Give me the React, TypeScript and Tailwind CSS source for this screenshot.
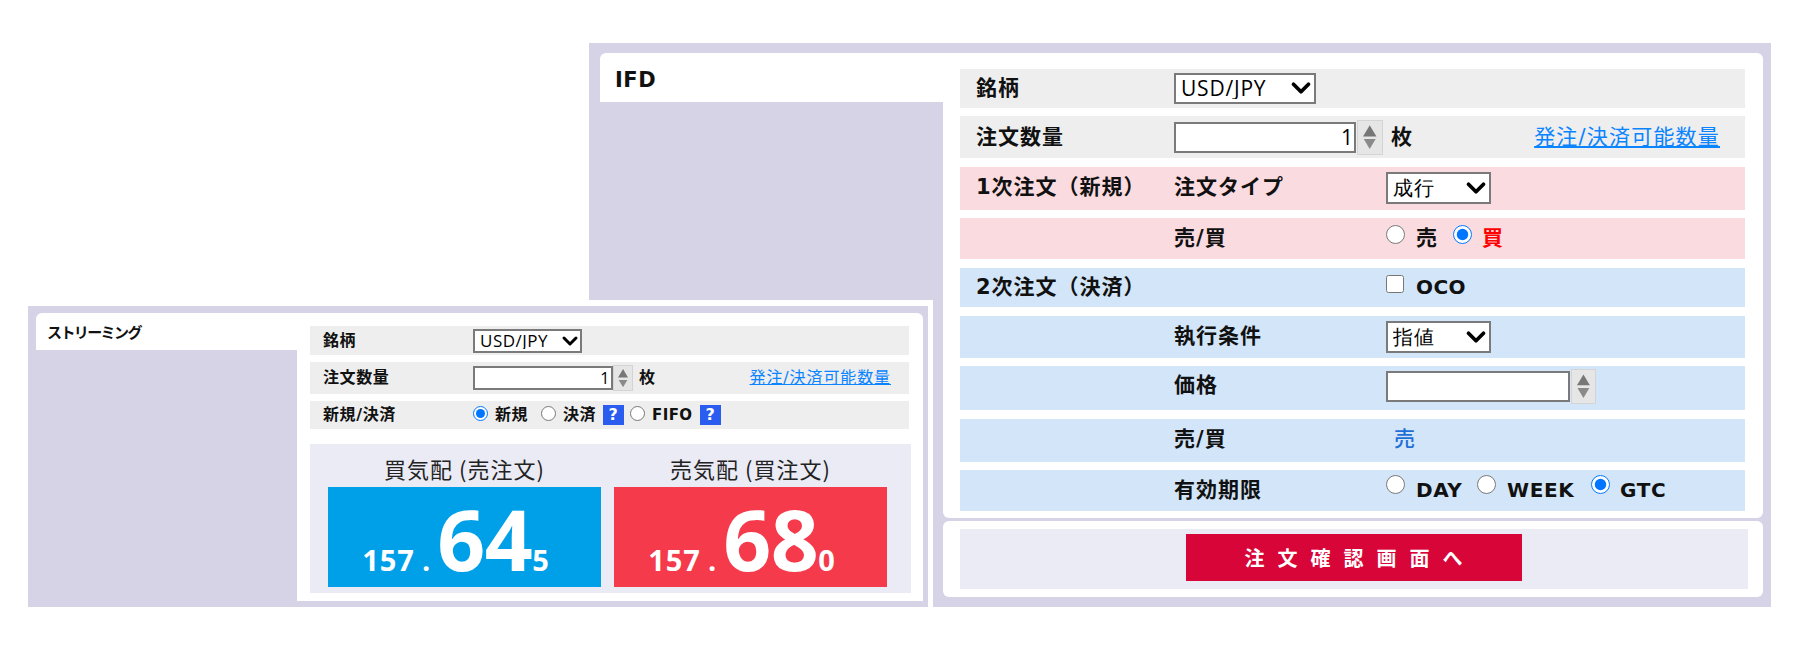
import { ReactNode } from "react";
import { ChevronDown } from "lucide-react";

const FONT = "font-['DejaVu_Sans','Noto_Sans_CJK_JP',sans-serif]";
const CJK = "font-['Noto_Sans_CJK_JP',sans-serif]";
const NUM = "font-['Open_Sans',sans-serif]";

function Select({ value, className, textClass, chevron }: { value: string; className: string; textClass: string; chevron: number }) {
  return (
    <span className={`relative block ${className}`}>
      <select
        defaultValue={value}
        className={`block h-full w-full appearance-none rounded-none border-2 border-[#7a7a7a] bg-white pl-[5px] font-normal text-black ${NUM} ${textClass}`}
      >
        <option>{value}</option>
      </select>
      <ChevronDown
        size={chevron}
        strokeWidth={3}
        className="pointer-events-none absolute right-0 top-1/2 -translate-y-1/2 text-black"
      />
    </span>
  );
}

function Spinner({ className }: { className: string }) {
  return (
    <span className={`flex flex-col items-center justify-center gap-[2px] border border-[#d4d4d4] bg-[#e6e6e6] ${className}`}>
      <svg viewBox="0 0 12 10" className="h-[36%] w-[56%]">
        <path d="M6 0 12 10H0Z" fill="#777777" />
      </svg>
      <svg viewBox="0 0 12 10" className="h-[30%] w-[56%]">
        <path d="M6 10 12 0H0Z" fill="#8a8a8a" />
      </svg>
    </span>
  );
}

function Radio({ checked, className }: { checked?: boolean; className: string }) {
  return <input type="radio" checked={!!checked} readOnly className={`m-0 shrink-0 ${className}`} />;
}

function Help() {
  return (
    <span className="flex h-[20px] w-[21px] items-center justify-center bg-[#2a5cf0] text-[16px] font-bold leading-none text-white">
      ?
    </span>
  );
}

function Price({ big, last, className }: { big: string; last: string; className: string }) {
  return (
    <div className={`flex h-[100px] w-[273px] items-baseline justify-center pr-[17px] font-bold text-white ${NUM} ${className}`}>
      <span className="text-[29px] leading-[104px] tracking-[1px]">157</span>
      <span className="ml-[7px] text-[29px] leading-[104px]">.</span>
      <span className="ml-[6px] text-[84px] leading-[104px] tracking-[-0.5px]">{big}</span>
      <span className="text-[29px] leading-[104px]">{last}</span>
    </div>
  );
}

function Row({ className, children }: { className: string; children: ReactNode }) {
  return <div className={`relative flex items-center ${className}`}>{children}</div>;
}

function BigRow({ bg, h, first, second, children }: { bg: string; h: string; first?: string; second?: string; children?: ReactNode }) {
  return (
    <Row className={`${bg} ${h} text-[21px] font-bold tracking-[1px] text-[#111]`}>
      <span className="w-[214px] shrink-0 pl-[16px]">{first}</span>
      <span className="w-[212px] shrink-0">{second}</span>
      {children}
    </Row>
  );
}

function StreamingPanel() {
  return (
    <section className={`absolute left-[28px] top-[300px] box-content flex h-[288px] w-[887px] border-t-[6px] border-r-[5px] border-white bg-[#d6d3e6] pb-[6px] pl-[8px] pr-[5px] pt-[7px] ${FONT}`}>
      <div className="w-[261px] shrink-0">
        <div className="h-[37px] rounded-tl-md bg-white pl-[11px] pt-[8px] text-[15px] font-bold leading-[24px] tracking-[-1.6px] text-[#111]">
          ストリーミング
        </div>
      </div>
      <div className="flex-1 rounded-tr-md bg-white pl-[13px] pr-[12px] pt-[13px]">
        <div className="mr-[2px] flex flex-col gap-[7px] text-[16px] font-bold tracking-[0.6px] text-[#111]">
          <Row className="h-[29px] bg-[#eeeeee]">
            <span className="w-[163px] pl-[13px]">銘柄</span>
            <Select value="USD/JPY" className="h-[24px] w-[109px]" textClass="text-[17px] leading-none tracking-[0.5px]" chevron={24} />
          </Row>
          <Row className="h-[32px] bg-[#eeeeee]">
            <span className="w-[163px] pl-[13px]">注文数量</span>
            <input
              type="text"
              readOnly
              value="1"
              className={`h-[24px] w-[140px] rounded-none border-2 border-[#7a7a7a] bg-white pr-[1px] text-right text-[16px] font-normal text-black ${NUM}`}
            />
            <Spinner className="h-[26px] w-[20px]" />
            <span className="ml-[6px]">枚</span>
            <a className="ml-auto mr-[18px] text-[16px] font-normal tracking-[0.9px] text-[#0a84ff] underline">発注/決済可能数量</a>
          </Row>
          <Row className="h-[28px] bg-[#eeeeee]">
            <span className="w-[163px] pl-[13px]">新規/決済</span>
            <Radio checked className="size-[15px] -translate-y-[2px]" />
            <span className="ml-[7px] w-[46px]">新規</span>
            <Radio className="size-[15px] -translate-y-[2px]" />
            <span className="ml-[7px] w-[40px]">決済</span>
            <Help />
            <Radio className="ml-[6px] size-[15px] -translate-y-[2px]" />
            <span className="ml-[7px] w-[48px] text-[15px] tracking-[0.4px]">FIFO</span>
            <Help />
          </Row>
        </div>
        <div className="mt-[15px] h-[149px] bg-[#ebebf5] px-[18px] pt-[6px]">
          <div className={`grid grid-cols-[273px_273px] gap-x-[13px] text-center text-[22px] font-normal leading-[37px] tracking-[1px] text-[#222] ${CJK}`}>
            <span>買気配 (売注文)</span>
            <span>売気配 (買注文)</span>
            <Price big="64" last="5" className="bg-[#00a0e9]" />
            <Price big="68" last="0" className="bg-[#f43a4b]" />
          </div>
        </div>
      </div>
    </section>
  );
}

function IfdPanel() {
  return (
    <section className={`ml-[589px] flex h-[564px] w-[1182px] bg-[#d6d3e6] pl-[11px] pr-[8px] pt-[10px] ${FONT}`}>
      <div className="w-[343px] shrink-0">
        <div className="h-[49px] rounded-tl-md bg-white pl-[15px] pt-[13px] text-[21px] font-bold leading-[28px] tracking-[0.5px] text-[#111]">IFD</div>
      </div>
      <div className="flex-1">
        <div className="flex h-[465px] flex-col gap-y-[8.4px] rounded-b-md rounded-tr-md bg-white pb-[7px] pl-[17px] pr-[18px] pt-[16px]">
          <BigRow bg="bg-[#eeeeee]" h="h-[39px]" first="銘柄">
            <Select value="USD/JPY" className="-ml-[212px] h-[31px] w-[142px]" textClass="text-[21px] leading-none tracking-[0.8px]" chevron={30} />
          </BigRow>
          <BigRow bg="bg-[#eeeeee]" h="h-[42px]" first="注文数量">
            <div className="-ml-[212px] flex items-center">
              <input
                type="text"
                readOnly
                value="1"
                className={`h-[31px] w-[182px] rounded-none border-2 border-[#7a7a7a] bg-white text-right text-[21px] font-normal text-black ${NUM}`}
              />
              <Spinner className="ml-[1px] h-[35px] w-[26px]" />
              <span className="ml-[8px]">枚</span>
            </div>
            <a className="ml-auto mr-[25px] text-[21px] font-normal tracking-[1.2px] text-[#0a84ff] underline">発注/決済可能数量</a>
          </BigRow>
          <BigRow bg="bg-[#fadbe0]" h="h-[43px]" first="1次注文（新規）" second="注文タイプ">
            <Select value="成行" className="h-[32px] w-[105px]" textClass="text-[20px] leading-none" chevron={30} />
          </BigRow>
          <BigRow bg="bg-[#fadbe0]" h="h-[41px]" second="売/買">
            <Radio className="size-[19px] -translate-y-[4px]" />
            <span className="ml-[11px] w-[37px]">売</span>
            <Radio checked className="size-[19px] -translate-y-[4px]" />
            <span className="ml-[10px] text-[#ff0000]">買</span>
          </BigRow>
          <BigRow bg="bg-[#d2e5f9]" h="h-[40px]" first="2次注文（決済）">
            <input type="checkbox" readOnly className="m-0 size-[18px] -translate-y-[3px]" />
            <span className="ml-[12px] text-[20px] tracking-[0.4px]">OCO</span>
          </BigRow>
          <BigRow bg="bg-[#d2e5f9]" h="h-[42px]" second="執行条件">
            <Select value="指値" className="h-[32px] w-[105px]" textClass="text-[20px] leading-none" chevron={30} />
          </BigRow>
          <BigRow bg="bg-[#d2e5f9] pb-[4px]" h="h-[44px]" second="価格">
            <input type="text" readOnly className="h-[31px] w-[184px] rounded-none border-2 border-[#7a7a7a] bg-white" />
            <Spinner className="ml-[1px] h-[35px] w-[25px]" />
          </BigRow>
          <BigRow bg="bg-[#d2e5f9]" h="h-[43px]" second="売/買">
            <span className="ml-[8px] font-medium text-[#1f6fd6]">売</span>
          </BigRow>
          <BigRow bg="bg-[#d2e5f9]" h="h-[41px]" second="有効期限">
            <Radio className="size-[19px] -translate-y-[6px]" />
            <span className="ml-[11px] w-[58px] text-[20px] tracking-[0.6px]">DAY</span>
            <Radio className="ml-[3px] size-[19px] -translate-y-[6px]" />
            <span className="ml-[11px] w-[81px] text-[20px] tracking-[0.6px]">WEEK</span>
            <Radio checked className="ml-[3px] size-[19px] -translate-y-[6px]" />
            <span className="ml-[10px] text-[20px] tracking-[0.6px]">GTC</span>
          </BigRow>
        </div>
        <div className="mt-[3px] h-[76px] rounded-md bg-white pl-[17px] pr-[15px] pt-[8px]">
          <div className="flex h-[60px] justify-center bg-[#ebebf5] pt-[5px]">
            <button className={`h-[47px] w-[336px] bg-[#d80638] pl-[12px] text-[20px] font-bold tracking-[13px] text-white ${CJK}`}>
              注文確認画面へ
            </button>
          </div>
        </div>
      </div>
    </section>
  );
}

export default function App() {
  return (
    <div className="relative h-[650px] w-[1800px] overflow-hidden bg-white pt-[43px]">
      <IfdPanel />
      <StreamingPanel />
    </div>
  );
}
